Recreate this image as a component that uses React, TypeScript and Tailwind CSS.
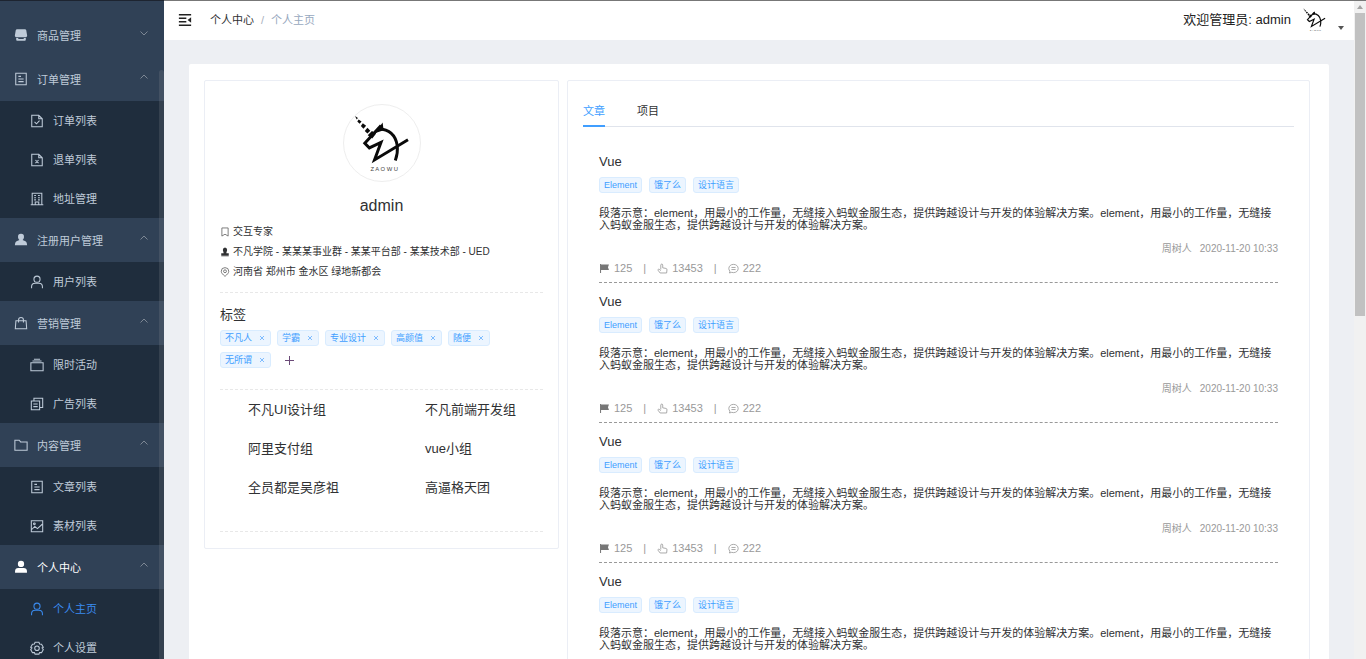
import { useState } from "react"
import type { ReactNode } from "react"

const icons: Record<string, ReactNode> = {
  goods: (
    <>
      <path d="M3.500 1.500h9c.8 0 1.300.4 1.500 1.200l1 6c.2 1-.5 1.800-1.500 1.800h-11c-1 0-1.700-.8-1.500-1.800l1-6c.2-.8.7-1.200 1.500-1.200z" fill="currentColor" stroke="none" />
      <path d="M2.500 11.500h2l.8 1h5.400l.8-1h2v1.500c0 .8-.5 1.500-1.500 1.500H4c-1 0-1.500-.7-1.500-1.500z" fill="currentColor" stroke="none" />
    </>
  ),
  document: <path d="M2 1.500h12v13H2zM5 5h3M5 8h6M5 11h6" />,
  docChecked: <path d="M2 1.500h8l4 4v9H2zM10 1.500v4h4M5.200 9l2.200 2.200 3.500-3.500" />,
  docDelete: <path d="M2 1.500h8l4 4v9H2zM10 1.500v4h4M6.200 8l3.600 3.600M9.800 8l-3.600 3.600" />,
  building: (
    <path d="M2.500 14V1.500h11V14M.8 14.500h14.400M6 14v-2.500h4V14M4.800 4h2M9.200 4h2M4.800 6.500h2M9.200 6.500h2M4.800 9h2M9.200 9h2" />
  ),
  custom: (
    <path
      d="M8 1a3.400 3.400 0 0 1 3.400 3.600c0 1.700-.8 2.800-1.600 3.500l2.700 1.100c1.500.6 2.300 1.800 2.500 4.800H1c.2-3 1-4.200 2.500-4.800l2.700-1.100C5.400 7.400 4.600 6.300 4.600 4.600A3.400 3.400 0 0 1 8 1z"
      fill="currentColor"
      stroke="none"
    />
  ),
  person: (
    <>
      <circle cx="8" cy="4.800" r="3.500" />
      <path d="M1.800 15v-1.500c0-2.500 1.600-4 4-4h4.400c2.400 0 4 1.500 4 4V15" />
    </>
  ),
  personSolid: (
    <>
      <circle cx="8" cy="4.500" r="3.600" fill="currentColor" stroke="none" />
      <path d="M1.200 14.500v-2c0-2 1.600-3.300 3.600-3.300h6.400c2 0 3.600 1.300 3.600 3.300v2z" fill="currentColor" stroke="none" />
    </>
  ),
  bag: <path d="M2.200 5.500h11.600l.7 9H1.500zM5.200 7.500V4.500a2.800 2.800 0 0 1 5.600 0v3" />,
  files: <path d="M1 5.500h14v9H1zM2.800 3.500h10.400M4.500 1.500h7" />,
  copy: <path d="M1.500 4.500h9.500v10H1.500zM4.500 4V1.500h10V12h-3M3.800 8h5M3.800 11h5" />,
  folder: <path d="M1 2.500h5l1.500 2H15v9.500H1z" />,
  picture: (
    <>
      <path d="M1.500 2h13v12.500h-13zM2 12l3.500-3.500 3 2.500 5.500-5" />
      <circle cx="5" cy="5.500" r="1" />
    </>
  ),
  setting: (
    <>
      <path d="M5.800 1.500h4.400l.8 2 2.200.1 2 3.600L13.800 8l1.400 1.800-2 3.500-2.200-.1-.8 1.800H5.800l-.8-1.800-2.200.1-2-3.500L2.200 8 .8 7.200l2-3.600L5 3.500z" />
      <circle cx="8" cy="8.200" r="2.600" />
    </>
  ),
  fold: (
    <>
      <path d="M1 2h14M1 6h8.500M1 10h8.500M1 14h14" strokeWidth="1.600" />
      <path d="M15 4.800v6.400L11 8z" fill="currentColor" stroke="none" />
    </>
  ),
  bookmark: <path d="M3 1.500h10v13l-5-3-5 3z" />,
  stamp: (
    <path
      d="M8 .8a3.800 3.800 0 0 1 3.300 4.300c-.2 2-1.100 2.700-1.100 5H14v2.500H2v-2.500h3.800c0-2.300-.9-3-1.100-5A3.800 3.800 0 0 1 8 .8zM2 13.200h12v1.500H2z"
      fill="currentColor"
      stroke="none"
    />
  ),
  location: (
    <>
      <path d="M8 15C4.500 12 2 9.500 2 6.800a6 5.800 0 0 1 12 0C14 9.500 11.500 12 8 15z" />
      <circle cx="8" cy="6.800" r="2.300" />
    </>
  ),
  flag: <path d="M1.500 1.500H3V2h11.500L13 6l1.500 4H3v4.500H1.500z" fill="currentColor" stroke="none" />,
  pointer: (
    <path d="M5.500 9.500V3a1.400 1.400 0 0 1 2.800 0v4l4.700.9c1 .2 1.600.9 1.500 1.900l-.5 4.700H4.500L1.500 10.500c-.3-1 .6-2 1.700-1.400l2.300 2" />
  ),
  chat: (
    <>
      <path d="M8 2c3.900 0 6.800 2.500 6.800 6s-2.900 6-6.800 6c-.9 0-1.800-.1-2.600-.4L2 14.500l.8-2.600C1.800 10.900 1.200 9.500 1.200 8c0-3.500 2.900-6 6.800-6z" />
      <path d="M5 6.500h6M5 9.500h6" />
    </>
  ),
}

function Icon({ name, className = "size-3.5" }: { name: string; className?: string }) {
  return (
    <svg
      viewBox="0 0 16 16"
      fill="none"
      stroke="currentColor"
      strokeWidth="1.200"
      aria-hidden="true"
      className={`shrink-0 ${className}`}
    >
      {icons[name]}
    </svg>
  )
}

function UnicornLogo({ className }: { className: string }) {
  return (
    <svg viewBox="0 0 234 234" className={className} role="img" aria-label="avatar">
      <g fill="#0a0a0a">
        <path d="M34 34l9 6-4 5z" />
        <path d="M45 45l9 6-6 7-7-7z" />
        <path d="M58 56l10 8-8 9-8-8z" />
        <path d="M72 70l9 9-9 9-8-8z" />
        <path d="M86 80l13 8-12 15-14-10z" />
        <path d="M119 54l3 24-27 9z" />
      </g>
      <g fill="none" stroke="#0a0a0a" strokeWidth="9">
        <path d="M114 63L64 118l14 14 36-17-20 54 103-62" />
        <path d="M106 73c38 2 54 26 58 52 2 18-1 32-6 46" />
      </g>
      <text x="124" y="203" textAnchor="middle" fontSize="18" fill="#444">
        Z A O W U
      </text>
    </svg>
  )
}

const menus = [
  { title: "商品管理", icon: "goods", children: [] },
  {
    title: "订单管理",
    icon: "document",
    children: [
      { title: "订单列表", icon: "docChecked" },
      { title: "退单列表", icon: "docDelete" },
      { title: "地址管理", icon: "building" },
    ],
  },
  { title: "注册用户管理", icon: "custom", children: [{ title: "用户列表", icon: "person" }] },
  {
    title: "营销管理",
    icon: "bag",
    children: [
      { title: "限时活动", icon: "files" },
      { title: "广告列表", icon: "copy" },
    ],
  },
  {
    title: "内容管理",
    icon: "folder",
    children: [
      { title: "文章列表", icon: "document" },
      { title: "素材列表", icon: "picture" },
    ],
  },
  {
    title: "个人中心",
    icon: "personSolid",
    children: [
      { title: "个人主页", icon: "person" },
      { title: "个人设置", icon: "setting" },
    ],
  },
]

function Sidebar() {
  return (
    <nav className="relative w-[164px] shrink-0 overflow-hidden border-t border-[#1d2430] bg-[#304156] pt-3 text-[11px] text-[#bfcbd9]">
      {menus.map((menu) => {
        const open = menu.children.length > 0
        const current = menu.title === "个人中心"
        return (
          <div key={menu.title}>
            <button
              aria-expanded={open}
              className={`flex h-11 w-full items-center gap-[9px] pr-4 pl-3.5 ${current ? "text-white" : ""}`}
            >
              <Icon name={menu.icon} />
              <span className="pt-0.5">{menu.title}</span>
              <svg viewBox="0 0 8 8" fill="none" stroke="#7d8794" className="mb-1 ml-auto size-2">
                <path d={open ? "M.5 5.500L4 2l3.500 3.500" : "M.5 2.500L4 6l3.500-3.500"} />
              </svg>
            </button>
            {menu.children.map((item) => (
              <a
                key={item.title}
                href="#"
                className={`flex h-[39px] items-center gap-[9px] bg-[#1f2d3d] pl-[30px] ${
                  item.title === "个人主页" ? "text-[#3a8bf0]" : ""
                }`}
              >
                <Icon name={item.icon} />
                <span className="pt-0.5">{item.title}</span>
              </a>
            ))}
          </div>
        )
      })}
      {/* menu scroll thumb */}
      <div className="absolute top-[69px] right-0 bottom-0 w-[5px] rounded-t bg-[#909399]/20" />
    </nav>
  )
}

function Header() {
  return (
    <header className="flex h-10 shrink-0 items-center border-t border-[#777] bg-white pr-2.5 pb-0.5 pl-3.5">
      <button aria-label="折叠菜单" className="text-[#222]">
        <Icon name="fold" />
      </button>
      <div className="ml-[18px] flex gap-[7px] pt-0.5 text-[11px]">
        <a href="#" className="text-[#303133]">
          个人中心
        </a>
        <span className="text-[#a8b0bd]">/</span>
        <span className="text-[#97a8be]">个人主页</span>
      </div>
      <span className="ml-auto text-[13px] text-[#222]">欢迎管理员: admin</span>
      <button aria-label="用户菜单" className="ml-2 flex items-center gap-2">
        <UnicornLogo className="size-[31px]" />
        <svg viewBox="0 0 6 4" className="mt-4 h-1 w-1.5">
          <path d="M0 0h6L3 4z" fill="#555" />
        </svg>
      </button>
    </header>
  )
}

function Tag({ text, onClose }: { text: string; onClose?: () => void }) {
  return (
    <span className="flex h-4 items-center rounded-[3px] border border-[#d9ecff] bg-[#ecf5ff] px-1 text-[9px] leading-[14px] text-[#409eff]">
      {text}
      {onClose && (
        <button aria-label={`删除 ${text}`} onClick={onClose} className="ml-1.5 flex size-2 items-center justify-center">
          <svg viewBox="0 0 6 6" stroke="#7fbcff" className="size-1.5">
            <path d="M1 1l4 4M5 1L1 5" />
          </svg>
        </button>
      )}
    </span>
  )
}

const groups = ["不凡UI设计组", "不凡前端开发组", "阿里支付组", "vue小组", "全员都是吴彦祖", "高逼格天团"]

function ProfileCard() {
  const [tags, setTags] = useState(["不凡人", "学霸", "专业设计", "高颜值", "随便", "无所谓"])

  return (
    <section className="rounded-xs border border-[#ebeef5] px-[15px] pt-[23px] pb-4">
      <div className="mx-auto size-[78px] overflow-hidden rounded-full border border-[#eee]">
        <UnicornLogo className="size-full" />
      </div>
      <h2 className="mt-3 text-center text-[16px] leading-6 text-[#303133]">admin</h2>

      <ul className="mt-1 text-[10px] leading-5 text-[#303133]">
        <li className="flex items-center gap-[3px]">
          <Icon name="bookmark" className="size-2.5 text-[#555]" />
          交互专家
        </li>
        <li className="flex items-center gap-[3px]">
          <Icon name="stamp" className="size-2.5" />
          不凡学院 - 某某某事业群 - 某某平台部 - 某某技术部 - UED
        </li>
        <li className="flex items-center gap-[3px]">
          <Icon name="location" className="size-2.5 text-[#555]" />
          河南省 郑州市 金水区 绿地新都会
        </li>
      </ul>

      <div className="mt-2.5 border-t border-dashed border-[#e8e8e8] pt-3">
        <h3 className="text-[13px] leading-5 text-[#303133]">标签</h3>
        <div className="mt-[5px] flex flex-wrap gap-1.5">
          {tags.map((tag) => (
            <Tag key={tag} text={tag} onClose={() => setTags(tags.filter((t) => t !== tag))} />
          ))}
          <button aria-label="添加标签" className="ml-1 flex size-4 items-center justify-center">
            <svg viewBox="0 0 9 9" stroke="#6b4a78" className="size-[9px]">
              <path d="M4.500 0v9M0 4.500h9" />
            </svg>
          </button>
        </div>
      </div>

      <ul className="mt-[21px] grid grid-cols-[60%_40%] border-y border-dashed border-[#e8e8e8] pb-6 pl-7 text-[13px] leading-[39px] text-[#303133]">
        {groups.map((group) => (
          <li key={group}>{group}</li>
        ))}
      </ul>
    </section>
  )
}

const content =
  "段落示意：element，用最小的工作量，无缝接入蚂蚁金服生态，提供跨越设计与开发的体验解决方案。element，用最小的工作量，无缝接入蚂蚁金服生态，提供跨越设计与开发的体验解决方案。"

const articles = [1, 2, 3, 4].map((id) => ({
  id,
  title: "Vue",
  tags: ["Element", "饿了么", "设计语言"],
  content,
  author: "周树人",
  time: "2020-11-20 10:33",
}))

function ArticleList() {
  return (
    <div className="px-4 pt-4">
      {articles.map((article) => (
        <article key={article.id} className="border-b border-dashed border-[#999] pt-[9px] pb-1">
          <h3 className="text-[13px] leading-5 text-[#303133]">{article.title}</h3>
          <div className="mt-[5px] flex gap-[7px]">
            {article.tags.map((tag) => (
              <Tag key={tag} text={tag} />
            ))}
          </div>
          <p className="mt-3.5 text-[11px] leading-3 text-[#303133]">{article.content}</p>
          <div className="mt-2 flex justify-end gap-2 text-[10px] leading-5 text-[#999]">
            <span>{article.author}</span>
            <span>{article.time}</span>
          </div>
          <div className="flex items-center gap-[11px] text-[11px] leading-[19px] text-[#999]">
            <span className="flex items-center gap-1">
              <Icon name="flag" className="size-[11px] text-[#777]" />
              125
            </span>
            <span>|</span>
            <span className="flex items-center gap-1">
              <Icon name="pointer" className="size-[11px]" />
              13453
            </span>
            <span>|</span>
            <span className="flex items-center gap-1">
              <Icon name="chat" className="size-[11px]" />
              222
            </span>
          </div>
        </article>
      ))}
    </div>
  )
}

export default function App() {
  const [tab, setTab] = useState("文章")

  return (
    <div className="flex h-screen overflow-hidden bg-[#edeff3] font-['Liberation_Sans','Noto_Sans_CJK_SC',sans-serif]">
      <Sidebar />

      <div className="flex min-w-0 flex-1 flex-col">
        <Header />
        <main className="min-h-0 flex-1 overflow-hidden px-[25px] pt-6">
          <div className="grid grid-cols-[355fr_743fr] items-start gap-2 rounded-xs bg-white py-4 pr-[19px] pl-[15px]">
            <ProfileCard />

            <section className="min-w-0 rounded-xs border border-[#ebeef5] p-[15px]">
              <div role="tablist" className="flex gap-8 border-b border-[#e0e4ec] text-[11px] leading-[27px]">
                {["文章", "项目"].map((name) => (
                  <button
                    key={name}
                    role="tab"
                    aria-selected={tab === name}
                    onClick={() => setTab(name)}
                    className={`-mb-px border-b-2 pt-0.5 ${
                      tab === name ? "border-[#409eff] text-[#409eff]" : "border-transparent text-[#303133]"
                    }`}
                  >
                    {name}
                  </button>
                ))}
              </div>
              {tab === "文章" && <ArticleList />}
            </section>
          </div>
        </main>
      </div>

      {/* page scrollbar */}
      <div className="w-3 shrink-0 border-t border-[#777] bg-[#f1f1f1] px-px">
        <div className="flex h-3 items-center justify-center">
          <svg viewBox="0 0 6 4" className="h-1 w-1.5">
            <path d="M0 4h6L3 0z" fill="#a3a3a3" />
          </svg>
        </div>
        <div className="h-[46%] bg-[#c1c1c1]" />
      </div>
    </div>
  )
}
